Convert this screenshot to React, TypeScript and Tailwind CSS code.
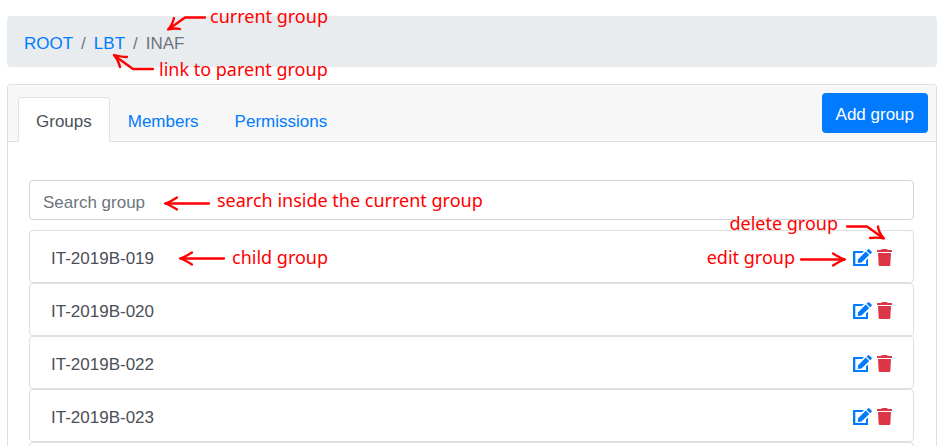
import type { ReactNode } from "react";

const groups = ["IT-2019B-019", "IT-2019B-020", "IT-2019B-022", "IT-2019B-023"];

const tabs = ["Groups", "Members", "Permissions"];

// shaft and head of each arrow shape
const arrows = {
    left: ["M45 6.5H2", "M13 .5C9 3 5 5.500 1 6.500C5 7.500 9 10 13 12.500"],
    right: ["M1 6.500H44", "M33 .5C37 3 41 5.500 45 6.500C41 7.500 37 10 33 12.500"],
    downLeft: ["M38 2.500H18L2 14", "M7 3C6 7 4 11.500 1 14.500C5 13.500 9 13 13 14"],
    upLeft: ["M40 15H20L2 2", "M14 3C9 3 5 2 1 1C4 4.500 6 8 7 13"],
    downRight: ["M1 2.500H21L37 14", "M32 2.500C32.500 7 34.500 11 38 14.500C34 13.500 29 13.500 24 14"],
};

function Arrow({ kind }: { kind: keyof typeof arrows }) {
    const [shaft, head] = arrows[kind];
    return (
        <svg className="overflow-visible" width="46" height="16" fill="none" stroke="#ff0000" strokeWidth="2.3" strokeLinecap="round" strokeLinejoin="round" aria-hidden="true">
            <path d={shaft} />
            <path d={head} />
        </svg>
    );
}

function EditIcon() {
    return (
        <svg width="19" height="17" viewBox="0 0 19 17" fill="currentColor" aria-hidden="true">
            <path d="M.5 2H11L9 4.100H2.300V15H13V11.500L15 9.500V17H.5Q0 17 0 16.500V2.500Q0 2 .5 2Z" />
            <path d="M12.800 2.500L16.200 5.900L8.500 13.500L4.700 14L5.200 10.200Z" />
            <path d="M13.600 1.700L14.900.4Q15.600-.2 16.300.4L18.500 2.500Q19.200 3.200 18.500 3.900L17.100 5.200Z" />
        </svg>
    );
}

function TrashIcon() {
    return (
        <svg width="15" height="17" viewBox="0 0 15 17" fill="currentColor" aria-hidden="true">
            <path d="M5 0H10L10.700 1H14.500Q15 1 15 1.500V3H0V1.500Q0 1 .5 1H4.300Z" />
            <path d="M1 4H14L13.300 16Q13.200 17 12.300 17H2.700Q1.800 17 1.700 16Z" />
        </svg>
    );
}

function Callout({ className, children }: { className: string; children: ReactNode }) {
    return (
        <span className={`pointer-events-none flex whitespace-nowrap font-['Noto_Sans',sans-serif] text-[18px] leading-6 text-[#ff0000] ${className}`}>
            {children}
        </span>
    );
}

export default function App() {
    return (
        <div className="bg-white pl-[7px] pr-2 pt-4 font-['Liberation_Sans',Arial,sans-serif] text-[17px] leading-[26px] text-[#495057]">
            <nav aria-label="Breadcrumb" className="relative rounded-[4px] bg-[#e9ecef] px-[17px] pb-[10px] pt-[15px]">
                <ol className="flex gap-2 text-[#6c757d]">
                    <li><a href="#root" className="text-[#007bff]">ROOT</a></li>
                    <li aria-hidden="true">/</li>
                    <li><a href="#lbt" className="text-[#007bff]">LBT</a></li>
                    <li aria-hidden="true">/</li>
                    <li aria-current="page">INAF</li>
                </ol>
                <Callout className="absolute -top-3 left-40 items-end">
                    <Arrow kind="downLeft" />
                    <span className="-ml-[3px] pb-[3px]">current group</span>
                </Callout>
                <Callout className="absolute -bottom-[14px] left-[106px] items-start">
                    <Arrow kind="upLeft" />
                    <span className="pt-[3px]">link to parent group</span>
                </Callout>
            </nav>

            <main className="mt-[17px] rounded-t-[4px] border border-b-0 border-[#dfdfdf]">
                <header className="flex items-end justify-between rounded-t-[3px] border-b border-[#dfdfdf] bg-[#f7f7f7] pl-[10px] pr-2 pt-2">
                    <div role="tablist" className="-mb-px flex">
                        {tabs.map((tab, i) => (
                            <button
                                key={tab}
                                type="button"
                                role="tab"
                                aria-selected={i === 0}
                                className={
                                    i === 0
                                        ? "rounded-t-[4px] border border-[#dee2e6] border-b-white bg-white px-[17px] pb-[6px] pt-[11px]"
                                        : "border border-transparent px-[17px] pb-[6px] pt-[11px] text-[#007bff]"
                                }
                            >
                                {tab}
                            </button>
                        ))}
                    </div>
                    <button type="button" className="mb-2 h-10 rounded-[4px] bg-[#007bff] px-[14px] pt-1 text-white">
                        Add group
                    </button>
                </header>

                <section className="pl-[21px] pr-[22px] pt-[38px]">
                    <div className="relative">
                        <input
                            type="text"
                            aria-label="Search group"
                            placeholder="Search group"
                            className="block h-10 w-full rounded-[4px] border border-[#ced4da] px-[13px] pt-[5px] placeholder:text-[#6c757d]"
                        />
                        <Callout className="absolute left-[135px] top-2 items-end gap-[7px]">
                            <Arrow kind="left" />
                            <span className="pb-px">search inside the current group</span>
                        </Callout>
                    </div>

                    <ul className="mt-[10px]">
                        {groups.map((group, i) => (
                            <li key={group} className="relative flex h-[53px] items-center rounded-[4px] border border-[#dfdfdf] px-[21px]">
                                <span className="pt-1">{group}</span>
                                {i === 0 && (
                                    <Callout className="ml-[25px] items-center gap-[7px]">
                                        <span className="pt-[7px]"><Arrow kind="left" /></span>
                                        <span>child group</span>
                                    </Callout>
                                )}
                                <span className="ml-auto flex items-center gap-[5px] pt-[2px]">
                                    {i === 0 && (
                                        <Callout className="mr-[2px] items-center gap-[5px]">
                                            <span className="pb-[2px]">edit group</span>
                                            <span className="pt-[7px]"><Arrow kind="right" /></span>
                                        </Callout>
                                    )}
                                    <button type="button" aria-label={`Edit ${group}`} className="text-[#007bff]">
                                        <EditIcon />
                                    </button>
                                    <button type="button" aria-label={`Delete ${group}`} className="text-[#dc3545]">
                                        <TrashIcon />
                                    </button>
                                </span>
                                {i === 0 && (
                                    <Callout className="absolute -top-5 right-[21px] items-end gap-2">
                                        <span className="pb-[5px]">delete group</span>
                                        <Arrow kind="downRight" />
                                    </Callout>
                                )}
                            </li>
                        ))}
                        {/* top edge of the next row */}
                        <li aria-hidden="true" className="h-1 rounded-t-[4px] border border-b-0 border-[#dfdfdf]" />
                    </ul>
                </section>
            </main>
        </div>
    );
}
